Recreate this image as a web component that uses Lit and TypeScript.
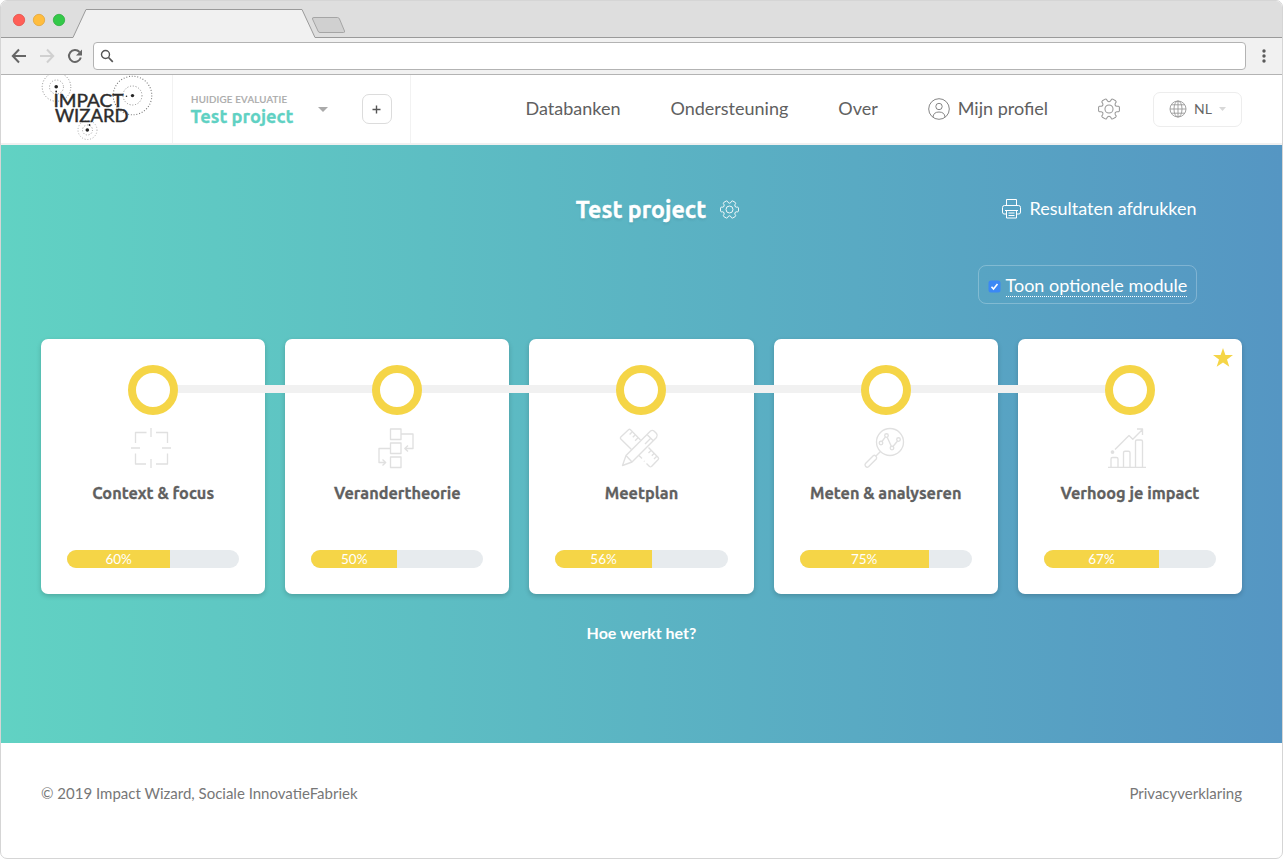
import { LitElement, html, svg, css } from "lit";
import { customElement, property } from "lit/decorators.js";

const gearPath = (() => {
  const pts: string[] = [];
  const p = (r: number, deg: number) => {
    const a = (deg * Math.PI) / 180;
    return `${(12 + r * Math.cos(a)).toFixed(2)} ${(12 + r * Math.sin(a)).toFixed(2)}`;
  };
  for (let k = 0; k < 6; k++) {
    const a = k * 60;
    pts.push(`${k ? "L" : "M"}${p(9, a - 19)}L${p(10.8, a - 16)}Q${p(11.5, a - 14)} ${p(11.5, a - 9)}L${p(11.5, a + 9)}Q${p(11.5, a + 14)} ${p(10.8, a + 16)}L${p(9, a + 19)}Q${p(7, a + 30)} ${p(9, a + 41)}`);
  }
  return pts.join("") + "Z";
})();

const gear = (size: number) => html`<svg width=${size} height=${size} viewBox="0 0 24 24" fill="none" stroke="currentColor" stroke-width="1.15" stroke-linejoin="round">
  <path d=${gearPath} /><circle cx="12" cy="12" r="4.4" />
</svg>`;

const stepIcons: Record<string, unknown> = {
  focus: svg`<path d="M4.500 15V4.500h11M25 4.500h11.500V15M36.500 25.500V36H25M15 36H4.500V25.500M20 0v9M20 31v9M0 20h9M31 20h9" />`,
  theory: svg`<path d="M13.500 1h10.500v10.500h-10.500zM13.500 15h10.500v10.500h-10.500zM13.500 29h10.500v10.500h-10.500zM24 6h12v14.500h-8M31 17.500l-3.200 3 3.200 3M13.500 20.500H2v14h6.500M5.500 31.500l3.200 3-3.200 3" />`,
  plan: svg`<path d="M19.500 12L9.500 1.700Q8.500.800 7.500 1.700L-.200 9Q-1.200 10 -.200 11L10.500 21.500M10.800 4.200l-2.200 2.200M13.800 7.200l-2 2M16.800 10l-2.700 2.700M27.500 19.500L37.200 29.500Q38 30.500 37.200 31.500L30.500 38.500Q29.500 39.200 28.500 38.500L25.500 35.500M23.500 33.500L23 33M21 30.500L18 27.500M30 22.500l-2.500 2.500M33 25.500l-2.200 2.200M35.500 28.500l-2.500 2.500"/>
    <path d="M1.500 37.500L5 27.500 29.500 3Q31.500 1.500 33.500 3.500L35.500 5.500Q37 7.500 35.500 9.500L11 34ZM5 27.500l6 6.500M26 6.500l6.500 6.500M29.500 10.500L24 16"/>`,
  analyse: svg`<circle cx="24" cy="14" r="13.500"/><circle cx="15" cy="15" r="1.800"/><circle cx="20.500" cy="7.500" r="1.800"/><circle cx="26" cy="20" r="1.800"/><circle cx="32.500" cy="11.500" r="1.800"/><path d="M16 13.500l3.400-4.600M21.200 9.200l4.100 9M27 18.500l4.500-5.500M14.200 23.700L9.700 28.200M7.500 27.500L-.500 35.500Q-1.600 37 -.500 38.300 1 40 2.500 38.700L10.500 30.700Q11 29.500 10 28.300 8.500 26.800 7.500 27.500Z"/>`,
  impact: svg`<path d="M0 39.300h38M3 39v-8q0-1.500 1.500-1.500h4q1.500 0 1.500 1.500v8M15.500 39V24.700q0-1.500 1.500-1.500h3.500q1.500 0 1.500 1.500V39M27.500 39V13.500q0-1.500 1.500-1.500h4q1.500 0 1.500 1.500V39M7 21.500L21 7.500l3.800 3.800L34.500 1.500M29 1h5.500v6"/><circle cx="4.500" cy="24" r="1.200" fill="#e0e0e0"/>`,
};

@customElement("module-card")
class ModuleCard extends LitElement {
  @property() icon = "";
  @property({ type: Number }) value = 0;
  @property({ type: Boolean }) starred = false;
  @property() position = "middle";

  static styles = css`
    :host { display: block; position: relative; min-width: 0; }
    .card { box-sizing: border-box; height: 255px; padding: 26px 26px 0; border-radius: 7px; background: #fff; box-shadow: 0 2px 5px rgba(0, 0, 0, .18); display: flex; flex-direction: column; align-items: center; }
    .line { position: absolute; top: 46px; left: -10px; right: -10px; height: 8px; background: #f1f1f1; z-index: 1; }
    .line.first { left: 50%; }
    .line.last { right: 50%; }
    .ring { box-sizing: border-box; width: 50px; height: 50px; border: 8px solid #f5d547; border-radius: 50%; background: #fff; position: relative; z-index: 2; }
    .icon { width: 40px; height: 40px; margin: 13px 4px 0 0; overflow: visible; }
    .icon.wide { margin-right: 0; }
    .name { margin-top: 13px; font: 700 16.250px/24px Ubuntu, "Noto Sans", sans-serif; color: #606060; -webkit-text-stroke: .3px #606060; white-space: nowrap; }
    .bar { width: 100%; height: 18px; margin-top: 45px; border-radius: 9px; overflow: hidden; background: #e7ebee; }
    .fill { height: 18px; background: #f5d547; color: #fff; font: 400 13.500px/19px Lato, sans-serif; text-align: center; }
    .star { position: absolute; right: 9px; top: 9px; width: 20px; height: 19px; }
  `;

  render() {
    return html`
      <div class="line ${this.position}"></div>
      <div class="card">
        <div class="ring"></div>
        <svg class="icon ${this.icon === "focus" || this.icon === "impact" ? "" : "wide"}" viewBox="0 0 40 40" fill="none" stroke="#e0e0e0" stroke-width="1.350" stroke-linejoin="round">${stepIcons[this.icon]}</svg>
        <div class="name"><slot></slot></div>
        <div class="bar"><div class="fill" style="width:${this.value}%">${this.value}%</div></div>
      </div>
      ${this.starred ? html`<svg class="star" viewBox="0 0 20 19" fill="#f5d547"><path d="M10 0l2.400 7H20l-6 4.500 2.300 7.300L10 14.400 3.700 18.800 6 11.500 0 7h7.600z" /></svg>` : ""}
    `;
  }
}

@customElement("app-root")
class AppRoot extends LitElement {
  static styles = css`
    :host { display: block; font-family: Lato, sans-serif; color: #606060; }
    * { box-sizing: border-box; }
    svg { display: block; flex: none; }
    .window { width: 1283px; height: 859px; border: 1px solid #d5d5d5; border-radius: 7px; overflow: hidden; background: #fff; }
    .tabs { height: 37px; background: #dedede; }
    .toolbar { height: 37px; background: #f1f1f1; border-bottom: 1px solid #b3b3b3; display: flex; align-items: center; padding: 0 10px 1px; }
    .address { width: 1153px; height: 28px; border: 1px solid #b3b3b3; border-radius: 4px; background: #fff; padding: 6px 0 0 6px; margin: 0 10px 0 10px; }
    .header { height: 70px; border-bottom: 2px solid #f0f0f0; display: flex; padding: 0 40px 0 40px; }
    .logo { width: 132px; height: 68px; border-right: 1px solid #f2f2f2; }
    .wordmark { font-family: Lato, sans-serif; font-size: 16.500px; }
    .project { width: 238px; height: 68px; border-right: 1px solid #f2f2f2; display: flex; padding-left: 18px; }
    .current { width: 127px; padding-top: 18px; }
    .label { font-size: 9.700px; font-weight: 500; line-height: 13px; color: #aaa; letter-spacing: .22px; -webkit-text-stroke: .2px #aaa; white-space: nowrap; }
    .title { margin-left: -.5px; font: 700 18.300px/20px Ubuntu, "Noto Sans", sans-serif; color: #5fd1c3; -webkit-text-stroke: .3px #5fd1c3; white-space: nowrap; }
    .caret { margin-top: 32px; }
    .add { width: 30px; height: 30px; margin: 19px 0 0 34px; border: 1px solid #dcdcdc; border-radius: 7px; display: flex; align-items: center; justify-content: center; padding-right: 1px; }
    .nav { flex: 1; display: flex; align-items: center; justify-content: flex-end; font-size: 18px; white-space: nowrap; }
    .item { margin-right: 50px; line-height: 24px; padding-bottom: 2px; }
    .item.profile { display: flex; align-items: center; gap: 8px; padding-bottom: 0; margin-right: 50px; }
    .profile span { padding-bottom: 2px; }
    .gear { color: #999; margin-right: 33px; }
    .lang { width: 89px; height: 35px; border: 1px solid #ededed; border-radius: 7px; display: flex; align-items: center; padding-left: 15px; font-size: 14px; color: #666; gap: 7px; }
    .lang span { padding-bottom: 2px; }
    .hero { height: 598px; background: linear-gradient(90deg, #61d2c3, #5596c3); padding: 46px 40px 0; color: #fff; }
    .heading { display: grid; grid-template-columns: 1fr auto 1fr; height: 36px; align-items: center; }
    .name { grid-column: 2; display: flex; align-items: center; gap: 14px; padding-left: 32px; font: 700 23.200px/36px Ubuntu, "Noto Sans", sans-serif; -webkit-text-stroke: .4px #fff; text-shadow: 0 2px 3px rgba(0, 0, 0, .08); white-space: nowrap; }
    .name svg { margin-top: 1px; }
    .print { display: flex; justify-content: flex-end; gap: 8px; padding-right: 45.500px; font-size: 18px; align-items: center; white-space: nowrap; }
    .print span { padding-bottom: 2px; }
    .option { width: 219px; height: 39px; margin: 38px 45.500px 0 auto; border: 1px solid rgba(255, 255, 255, .25); border-radius: 8px; display: flex; align-items: center; padding: 1px 0 0 9px; font-size: 18px; gap: 5px; white-space: nowrap; }
    .dotted { line-height: 21px; border-bottom: 1px dotted #fff; margin-top: 1px; }
    .check { margin-top: 3px; }
    .cards { display: grid; grid-template-columns: repeat(5, 1fr); gap: 20px; margin-top: 35px; }
    .how { margin-top: 28px; text-align: center; font-size: 16px; line-height: 22px; font-weight: 700; }
    .footer { display: flex; justify-content: space-between; padding: 39px 40px 0; font-size: 15px; line-height: 22px; color: #777; }
  `;

  render() {
    return html`
      <div class="window">
        <div class="tabs">
          <svg width="1281" height="37" viewBox="1 1 1281 37">
            <path d="M0 37.500H73L86 9.500H302L315 37.500H1283V40H0Z" fill="#f1f1f1" stroke="#9a9a9a" />
            <path d="M314 17.500H337.500Q338.800 17.500 339.500 19L344.500 31Q345 32.500 343.500 32.500H320Q318.500 32.500 318 31L312.500 19Q312 17.500 314 17.500Z" fill="#d0d0d0" stroke="#a5a5a5" />
            <circle cx="19" cy="20" r="5.700" fill="#ff5f57" stroke="#e2463f" stroke-width=".7" />
            <circle cx="39" cy="20" r="5.700" fill="#ffbd3e" stroke="#e0a030" stroke-width=".7" />
            <circle cx="59" cy="20" r="5.700" fill="#33c948" stroke="#25a838" stroke-width=".7" />
          </svg>
        </div>
        <div class="toolbar">
          <svg width="72" height="18" viewBox="11 47 72 18" fill="none" stroke-width="2">
            <path d="M26 56H13M19 49.500L12.800 56 19 62.500" stroke="#666" />
            <path d="M40 56H53M47 49.500L53.200 56 47 62.500" stroke="#d0d0d0" />
            <path d="M79.500 52A6 6 0 1 0 80.800 57.500" stroke="#666" />
            <path d="M82 49.500V55.500H76Z" fill="#666" />
          </svg>
          <div class="address">
            <svg width="15" height="15" viewBox="0 0 15 15" fill="none" stroke="#555" stroke-width="1.400"><circle cx="5.500" cy="5.500" r="4" /><path d="M8.500 8.500L12.800 12.800" stroke-width="1.700" /></svg>
          </div>
          <svg width="16" height="16" viewBox="0 0 16 16" fill="#5a5a5a"><circle cx="8" cy="3" r="1.700" /><circle cx="8" cy="8" r="1.700" /><circle cx="8" cy="13" r="1.700" /></svg>
        </div>
        <div class="header">
          <div class="logo">
            <svg width="114" height="66" viewBox="41 75 114 66" fill="none">
              <g stroke="#8c8c8c" stroke-width="1" stroke-dasharray="1 1.800">
                <circle cx="56.500" cy="87" r="14.300" /><circle cx="56.500" cy="87" r="7" stroke="#999" />
                <circle cx="132.500" cy="95.500" r="19.300" stroke="#777" stroke-width="1.100" /><circle cx="132.500" cy="95.500" r="9.500" />
                <circle cx="87.500" cy="130" r="9.500" stroke="#aaa" /><circle cx="87.500" cy="130" r="5" stroke="#999" />
              </g>
              <g fill="#252525"><circle cx="56.200" cy="86.700" r="1.800" /><circle cx="132.500" cy="95.600" r="1.700" /><circle cx="87.300" cy="130" r="1.800" /><circle cx="56.200" cy="91.500" r=".9" /><circle cx="126.500" cy="96.200" r=".8" /><circle cx="89.500" cy="125" r=".9" /></g>
              <g class="wordmark" fill="#2c2c2c" stroke="#2c2c2c" stroke-width=".4">
                <text x="53.500" y="107" textLength="70" lengthAdjust="spacingAndGlyphs">IMPACT</text>
                <text x="55" y="122.200" textLength="73.500" lengthAdjust="spacingAndGlyphs">WIZARD</text>
              </g>
            </svg>
          </div>
          <div class="project">
            <div class="current"><div class="label">HUIDIGE EVALUATIE</div><div class="title">Test project</div></div>
            <svg class="caret" width="10" height="5" viewBox="0 0 10 5" fill="#aaa"><path d="M0 0h10L5 5z" /></svg>
            <div class="add"><svg width="9" height="9" viewBox="0 0 9 9" stroke="#555" stroke-width="1.400"><path d="M4.500.500v8M.500 4.500h8" /></svg></div>
          </div>
          <div class="nav">
            <div class="item">Databanken</div>
            <div class="item">Ondersteuning</div>
            <div class="item">Over</div>
            <div class="item profile">
              <svg width="22" height="22" viewBox="0 0 22 22" fill="none" stroke="#777" stroke-width=".9"><circle cx="11" cy="11" r="10.300" /><circle cx="11" cy="8.500" r="3.200" /><path d="M5 19Q5.500 14 11 14T17 19" /></svg>
              <span>Mijn profiel</span>
            </div>
            <div class="gear">${gear(22)}</div>
            <div class="lang">
              <svg width="18" height="18" viewBox="0 0 18 18" fill="none" stroke="#999" stroke-width=".9"><circle cx="9" cy="9" r="8" /><ellipse cx="9" cy="9" rx="4" ry="8" /><path d="M9 1v16M1 9h16M2.200 4.800h13.600M2.200 13.200h13.600" /></svg>
              <span>NL</span>
              <svg width="7" height="4" viewBox="0 0 7 4" fill="#d8d8d8"><path d="M0 0h7L3.500 4z" /></svg>
            </div>
          </div>
        </div>
        <div class="hero">
          <div class="heading">
            <div class="name"><span>Test project</span>${gear(19)}</div>
            <div class="print">
              <svg width="20" height="20" viewBox="0 0 20 20" fill="none" stroke="#fff" stroke-width="1"><path d="M4.500 6V.500h10V6M4.500 15H2Q.500 15 .500 13V8.500Q.500 6.500 2.500 6.500h14q2 0 2 2V13q0 2-1.500 2h-2.500M4.500 11.500h10v7.500h-10zM6.500 14h6M6.500 16.500h6M3 11.500h13" /></svg>
              <span>Resultaten afdrukken</span>
            </div>
          </div>
          <div class="option">
            <svg class="check" width="13" height="13" viewBox="0 0 13 13"><rect x=".5" y=".5" width="12" height="12" rx="2.500" fill="#3b88f5" /><path d="M3.500 6.800l2 2.200 4-5" fill="none" stroke="#fff" stroke-width="1.600" /></svg>
            <span class="dotted">Toon optionele module</span>
          </div>
          <div class="cards">
            <module-card icon="focus" value="60" position="first">Context &amp; focus</module-card>
            <module-card icon="theory" value="50">Verandertheorie</module-card>
            <module-card icon="plan" value="56">Meetplan</module-card>
            <module-card icon="analyse" value="75">Meten &amp; analyseren</module-card>
            <module-card icon="impact" value="67" position="last" starred>Verhoog je impact</module-card>
          </div>
          <div class="how">Hoe werkt het?</div>
        </div>
        <div class="footer"><span>© 2019 Impact Wizard, Sociale InnovatieFabriek</span><span>Privacyverklaring</span></div>
      </div>
    `;
  }
}
